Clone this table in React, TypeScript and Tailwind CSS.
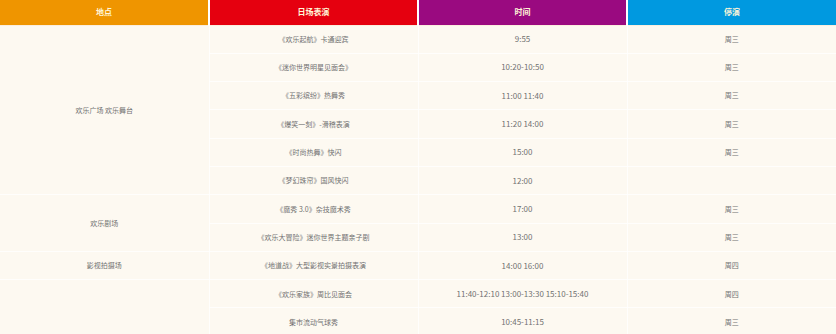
import React from 'react';

type Row = { place?: string; span?: number; show: string; time: string; off: string };

const rows: Row[] = [
  { place: '欢乐广场 欢乐舞台', span: 6, show: '《欢乐起航》卡通迎宾', time: '9:55', off: '周三' },
  { show: '《迷你世界明星见面会》', time: '10:20-10:50', off: '周三' },
  { show: '《五彩缤纷》热舞秀', time: '11:00 11:40', off: '周三' },
  { show: '《爆笑一刻》-滑稽表演', time: '11:20 14:00', off: '周三' },
  { show: '《时尚热舞》快闪', time: '15:00', off: '周三' },
  { show: '《梦幻珠帘》国风快闪', time: '12:00', off: '' },
  { place: '欢乐剧场', span: 2, show: '《魔秀 3.0》杂技魔术秀', time: '17:00', off: '周三' },
  { show: '《欢乐大冒险》迷你世界主题亲子剧', time: '13:00', off: '周三' },
  { place: '影视拍摄场', span: 1, show: '《地道战》大型影视实景拍摄表演', time: '14:00 16:00', off: '周四' },
  { place: '', span: 2, show: '《欢乐家族》周比见面会', time: '11:40-12:10 13:00-13:30 15:10-15:40', off: '周四' },
  { show: '集市流动气球秀', time: '10:45-11:15', off: '周三' },
];

const heads = [
  { label: '地点', cls: 'bg-[#ef9500]' },
  { label: '日场表演', cls: 'bg-[#e5000f]' },
  { label: '时间', cls: 'bg-[#9a0a80]' },
  { label: '停演', cls: 'bg-[#0099e0]' },
];

const cell = 'border border-white/80 text-center align-middle';

export default function App() {
  return (
    <div className="h-[334px] w-[836px] overflow-hidden bg-[#fdf9f1] font-['Noto_Sans_CJK_SC','Microsoft_YaHei',sans-serif]">
      <table className="w-full table-fixed border-collapse">
        <thead>
          <tr className="h-[25px]">
            {heads.map((h) => (
              <th
                key={h.label}
                className={`${h.cls} border-x-2 border-b border-x-white border-b-[#fbeede] p-0 text-center align-middle text-[8px] font-bold text-[#fff6d8] first:border-l-0 last:border-r-0`}
              >
                {h.label}
              </th>
            ))}
          </tr>
        </thead>
        <tbody className="text-[7px] text-[#727272]">
          {rows.map((r, i) => (
            <tr key={i} className="h-[28.3px]">
              {r.place !== undefined && (
                <td rowSpan={r.span} className={`${cell} border-l-0`}>
                  {r.place}
                </td>
              )}
              <td className={cell}>{r.show}</td>
              <td className={`${cell} text-[8px]`}>{r.time}</td>
              <td className={`${cell} border-r-0`}>{r.off}</td>
            </tr>
          ))}
        </tbody>
      </table>
    </div>
  );
}
